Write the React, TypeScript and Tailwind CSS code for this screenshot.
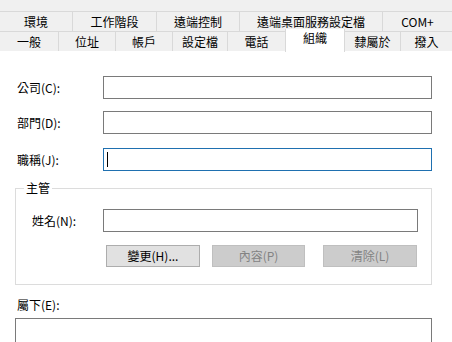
import React from "react";

const row1 = [
  { label: "環境", w: "w-[72px]" },
  { label: "工作階段", w: "w-[84px]" },
  { label: "遠端控制", w: "w-[83px]" },
  { label: "遠端桌面服務設定檔", w: "w-[143px]" },
  { label: "COM+", w: "w-[70px]" },
];

const row2 = [
  { label: "一般", w: "w-[58px]" },
  { label: "位址", w: "w-[57px]" },
  { label: "帳戶", w: "w-[57px]" },
  { label: "設定檔", w: "w-[55px]" },
  { label: "電話", w: "w-[58px]" },
  { label: "組織", w: "w-[60px]", active: true },
  { label: "隸屬於", w: "w-[55px]" },
  { label: "撥入", w: "w-[52px]" },
];

function Field({ label, focused }: { label: string; focused?: boolean }) {
  return (
    <div className="flex items-center h-[23px]">
      <span className="w-[88px] pl-[2px]">{label}</span>
      <div
        className={`flex-1 h-[23px] bg-white border flex items-center pl-[3px] ${
          focused ? "border-[#1f70b0]" : "border-[#7a7a7a]"
        }`}
      >
        {focused && <span className="w-px h-[15px] bg-black" />}
      </div>
    </div>
  );
}

export default function App() {
  return (
    <div
      className="w-[452px] h-[342px] overflow-hidden bg-[#f0f0f0] text-[12px] text-black leading-none"
      style={{ fontFamily: '"Noto Sans CJK TC", "Noto Sans", sans-serif' }}
    >
      {/* tab strip */}
      <div className="pt-[11px]">
        <div className="flex h-[20px] border-t border-[#d9d9d9]">
          {row1.map((t, i) => (
            <div
              key={t.label}
              className={`${t.w} flex items-center justify-center ${
                i > 0 ? "border-l border-[#d9d9d9]" : ""
              }`}
            >
              {t.label}
            </div>
          ))}
        </div>
        <div className="flex h-[20px] border-t border-[#d9d9d9]">
          {row2.map((t, i) =>
            t.active ? (
              <div
                key={t.label}
                className={`${t.w} -mt-[3px] h-[23px] bg-white flex items-start justify-center pt-[3px] border-l border-r border-[#d9d9d9]`}
              >
                {t.label}
              </div>
            ) : (
              <div
                key={t.label}
                className={`${t.w} flex items-center justify-center ${
                  i > 0 && !row2[i - 1].active ? "border-l border-[#d9d9d9]" : ""
                }`}
              >
                {t.label}
              </div>
            )
          )}
        </div>
      </div>

      {/* page body */}
      <div className="bg-white h-[291px] pl-[15px] pr-[20px] pt-[25px]">
        <div className="flex flex-col">
          <Field label="公司(C):" />
          <div className="h-[12px]" />
          <Field label="部門(D):" />
          <div className="h-[14px]" />
          <Field label="職稱(J):" focused />
        </div>

        <fieldset className="mt-[11px] border border-[#dcdcdc] h-[103px] pr-[13px]">
          <legend className="ml-[8px] px-[2px]">主管</legend>
          <div className="flex items-center h-[23px] mt-[15px]">
            <span className="w-[87px] pl-[16px]">姓名(N):</span>
            <div className="flex-1 h-[23px] border border-[#7a7a7a] bg-white" />
          </div>
          <div className="flex mt-[13px] pl-[90px] h-[22px]">
            <button className="w-[94px] h-[22px] bg-[#e1e1e1] border border-[#adadad] text-black">
              變更(H)...
            </button>
            <button
              disabled
              className="ml-[12px] w-[93px] h-[22px] bg-[#cccccc] border border-[#bfbfbf] text-[#838383]"
            >
              內容(P)
            </button>
            <button
              disabled
              className="ml-[18px] w-[94px] h-[22px] bg-[#cccccc] border border-[#bfbfbf] text-[#838383]"
            >
              清除(L)
            </button>
          </div>
        </fieldset>

        <div className="mt-[14px] pl-[2px] h-[12px]">屬下(E):</div>
        <div className="mt-[7px] h-[40px] border border-[#7a7a7a]" />
      </div>
    </div>
  );
}
